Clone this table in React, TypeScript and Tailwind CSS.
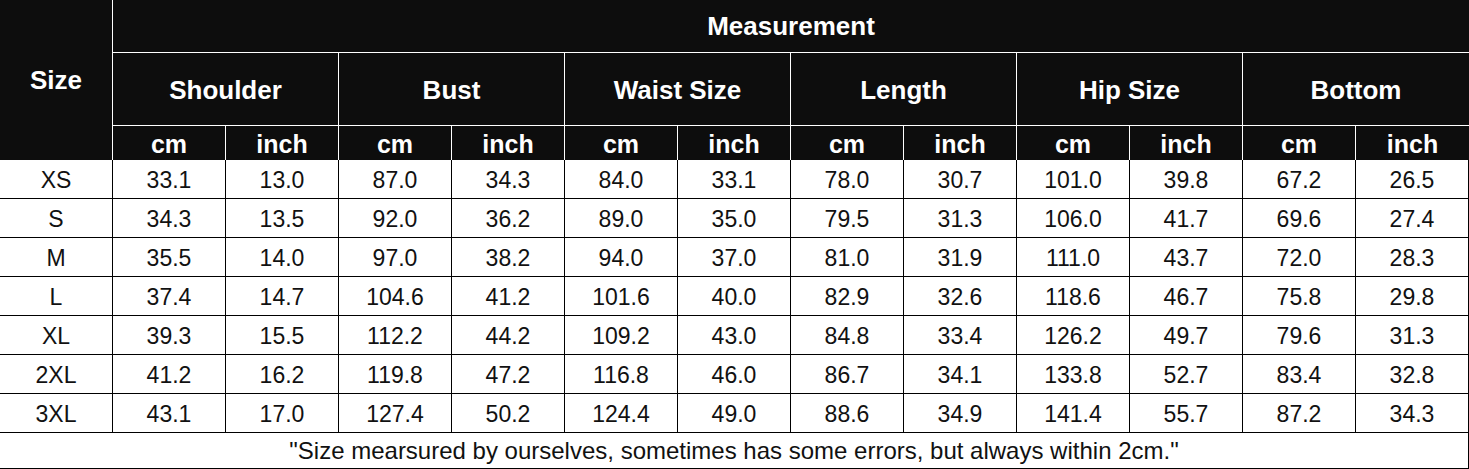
import React from "react";

const groups = ["Shoulder", "Bust", "Waist Size", "Length", "Hip Size", "Bottom"];

const rows: string[][] = [
  ["XS", "33.1", "13.0", "87.0", "34.3", "84.0", "33.1", "78.0", "30.7", "101.0", "39.8", "67.2", "26.5"],
  ["S", "34.3", "13.5", "92.0", "36.2", "89.0", "35.0", "79.5", "31.3", "106.0", "41.7", "69.6", "27.4"],
  ["M", "35.5", "14.0", "97.0", "38.2", "94.0", "37.0", "81.0", "31.9", "111.0", "43.7", "72.0", "28.3"],
  ["L", "37.4", "14.7", "104.6", "41.2", "101.6", "40.0", "82.9", "32.6", "118.6", "46.7", "75.8", "29.8"],
  ["XL", "39.3", "15.5", "112.2", "44.2", "109.2", "43.0", "84.8", "33.4", "126.2", "49.7", "79.6", "31.3"],
  ["2XL", "41.2", "16.2", "119.8", "47.2", "116.8", "46.0", "86.7", "34.1", "133.8", "52.7", "83.4", "32.8"],
  ["3XL", "43.1", "17.0", "127.4", "50.2", "124.4", "49.0", "88.6", "34.9", "141.4", "55.7", "87.2", "34.3"],
];

export default function App() {
  return (
    <div
      className="w-[1469px] h-[469px] bg-white overflow-hidden"
      style={{ fontFamily: '"Liberation Sans", Arial, sans-serif' }}
    >
      {/* Header */}
      <div className="flex h-[160px] bg-[#0d0d0d] text-white font-bold">
        <div className="w-[113px] shrink-0 border-r border-white flex items-center justify-center text-[26px] pt-[1px]">
          Size
        </div>
        <div className="flex-1 flex flex-col">
          <div className="h-[53px] border-b border-white flex items-center justify-center text-[26px] pt-[1px]">
            Measurement
          </div>
          <div className="h-[73px] border-b border-white flex">
            {groups.map((g, i) => (
              <div
                key={g}
                className={`w-[226px] shrink-0 flex items-center justify-center text-[26px] pt-[2px] ${
                  i < groups.length - 1 ? "border-r border-white" : ""
                }`}
              >
                {g}
              </div>
            ))}
          </div>
          <div className="h-[34px] flex">
            {groups.map((g, i) => (
              <React.Fragment key={g}>
                <div className="w-[113px] shrink-0 border-r border-white flex items-center justify-center text-[25px] pt-[3px]">
                  cm
                </div>
                <div
                  className={`w-[113px] shrink-0 flex items-center justify-center text-[25px] pt-[3px] ${
                    i < groups.length - 1 ? "border-r border-white" : ""
                  }`}
                >
                  inch
                </div>
              </React.Fragment>
            ))}
          </div>
        </div>
      </div>

      {/* Data rows */}
      {rows.map((r) => (
        <div key={r[0]} className="flex h-[39px] border-b border-black text-[#111] text-[23px]">
          {r.map((c, j) => (
            <div
              key={j}
              className="w-[113px] shrink-0 border-r border-black flex items-center justify-center pt-[3px]"
            >
              {c}
            </div>
          ))}
        </div>
      ))}

      {/* Footer */}
      <div className="h-[36px] w-[1469px] border-b border-r border-black flex items-center justify-center text-[#111] text-[24px] pt-[1px]">
        "Size mearsured by ourselves, sometimes has some errors, but always within 2cm."
      </div>
    </div>
  );
}
